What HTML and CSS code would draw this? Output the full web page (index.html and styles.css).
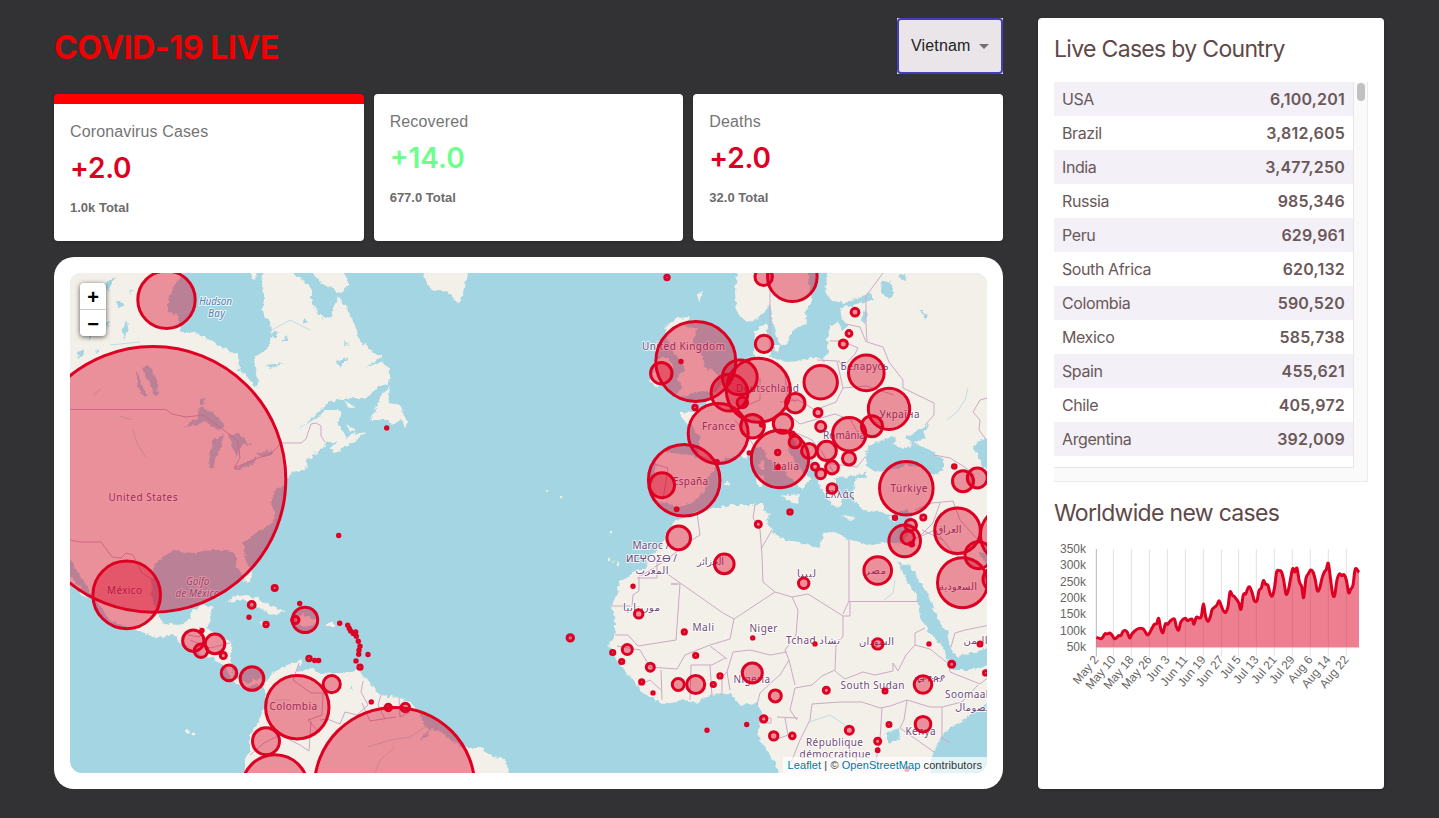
FILE: index.html
```html
<!DOCTYPE html>
<html lang="en">
<head>
<meta charset="utf-8">
<title>COVID-19 LIVE</title>
<link rel="stylesheet" href="styles.css">
</head>
<body>
<div class="app">
  <main class="left">
    <header class="header">
      <h1 class="title">COVID-19 LIVE</h1>
      <div class="select-box"><div class="select"><span>Vietnam</span><svg class="caret" viewBox="0 0 10 5"><path d="M0 0h10L5 5z"/></svg></div></div>
    </header>
    <section class="stats">
      <div class="card stat stat-active"><h2 class="stat-name">Coronavirus Cases</h2><div class="stat-value">+2.0</div><div class="stat-total">1.0k Total</div></div>
      <div class="card stat"><h2 class="stat-name">Recovered</h2><div class="stat-value stat-green">+14.0</div><div class="stat-total">677.0 Total</div></div>
      <div class="card stat"><h2 class="stat-name">Deaths</h2><div class="stat-value">+2.0</div><div class="stat-total">32.0 Total</div></div>
    </section>
    <section class="map-card">
      <div class="map">
        <svg class="map-svg" viewBox="70 273 917 500">
          <defs>
            <filter id="coast" filterUnits="userSpaceOnUse" x="60" y="263" width="937" height="520">
              <feTurbulence type="fractalNoise" baseFrequency="0.2" numOctaves="3" seed="4"/>
              <feDisplacementMap in="SourceGraphic" scale="5.5" xChannelSelector="R" yChannelSelector="G"/>
            </filter>
          </defs>
          <g class="land" filter="url(#coast)">
            <!-- North and Central America -->
            <path d="M60 263H184L184 273 175 285 168 300 168 313 177 315 180 327 182 332 193 332 210 340 227 350 238 355 239 370 247 375 252 385 257 388 259 382 255 367 254 357 267 350 272 337 270 323 262 313 264 300 262 287 264 263H292L292 273 303 280 312 290 312 303 317 312 323 319 332 318 334 307 338 295 343 303 353 320 360 340 373 352 382 357 365 368 380 362 390 368 389 383 377 388 367 398 353 398 337 400 327 403 317 413 307 423 292 433 313 420 327 410 340 410 342 415 337 422 342 430 347 437 360 432 365 433 353 442 340 450 333 453 331 448 337 442 327 442 320 450 307 460 305 470 293 473 287 477 283 487 275 490 272 500 275 517 273 523 257 532 243 543 245 557 252 573 250 582 245 581 242 573 237 567 236 555 227 550 210 550 193 553 173 550 163 557 155 563 152 577 151 597 157 613 163 623 177 625 188 622 193 610 203 605 213 607 210 620 207 627 213 634 233 643 230 657 232 667 233 677 247 683 260 677 265 682 273 673 287 665 302 660 297 672 313 668 318 673 350 672 360 670 363 677 370 683 380 695 397 697 410 702 420 713 425 727 443 733 460 747 480 747 493 757 505 759 512 783H245V757L250 750 250 733 260 718 267 703 265 690 258 684 247 688 233 682 227 670 217 660 207 657 193 650 180 642 173 635 157 638 140 632 110 620 97 603 87 587 77 570 70 560H60z"/>
            <path d="M60 575 72 578 80 586 87 599 78 591 70 584H60zM423 263 423 273 427 283 433 292 447 290 457 303 461 300 466 280 468 263zM390 387 382 393 375 410 370 420 387 420 393 425 400 420 405 428 407 422 400 405 388 403zM227 602 233 597 247 595 260 600 273 607 286 612 270 615 260 607 243 600zM294 623 302 614 313 618 319 623 307 627zM325 623H334V626H325zM260 623 267 622 269 625 262 626zM250 265H259L254 281zM310 263H340L349 285 340 293 330 287 320 283 314 275zM344 400 355 407 349 408zM346 425 357 430 350 432z"/>
            <!-- Europe, Africa and the Middle East -->
            <path d="M738 263 735 293 737 313 748 323 763 315 770 303 773 320 778 340 782 347 788 342 793 330 807 323 805 312 813 300 810 290 806 263H830L825 290 832 301 845 303 860 297 870 293 873 300 860 303 840 308 842 320 848 326 843 330 838 322 830 327 827 340 828 353 823 360 817 357 800 360 790 363 770 357 773 343 767 333 767 323 755 331 754 357 740 362 733 370 727 380 718 388 710 397 705 408 697 412 680 413 683 420 693 427 700 437 698 457 690 455 663 452 657 457 653 480 650 490 655 502 667 503 675 508 693 503 705 490 708 477 720 463 727 457 747 457 753 448 763 447 767 457 777 467 790 477 800 487 803 491 806 483 812 480 797 467 790 453 787 442 793 438 797 447 810 460 817 473 820 487 827 497 832 506 840 507 842 500 837 487 835 478 853 477 865 472 867 476 855 480 854 487 853 500 863 510 880 513 893 515 905 510 913 515 910 530 903 543 890 542 872 545 850 540 837 532 823 533 820 548 800 543 790 542 773 533 767 523 770 513 763 510 763 503 753 505 730 505 697 512 677 520 667 530 663 545 650 557 646 568 633 573 620 582 612 607 615 623 615 633 609 645 617 660 627 673 643 693 663 704 680 700 697 703 710 695 730 693 740 705 757 703 762 713 757 735 767 750 777 767 778 783H930V762L937 743 947 730 967 717 997 697V263z"/>
            <path d="M677 318 690 317 685 327 698 328 692 343 700 353 705 367 718 373 717 383 713 392 697 393 673 398 683 387 677 380 680 373 685 370 680 360 673 353 668 340 665 327zM650 383 655 360 667 357 673 367 668 382 657 387zM697 293 702 292 699 303zM759 463 764 460 763 472 760 470zM757 475 764 474 763 487 758 488zM780 496 800 494 797 504 790 502zM842 515 855 517 850 520zM889 518 898 515 894 522zM772 346 780 345 778 353zM723 484 731 481 729 487z"/>
            <circle cx="609" cy="560" r="1.2"/><circle cx="613" cy="562" r="1.4"/><circle cx="618" cy="564" r="1.4"/><circle cx="546" cy="491" r="1.2"/><circle cx="562" cy="497" r="1.2"/><circle cx="188" cy="732" r="2"/><circle cx="194" cy="734" r="1.4"/><circle cx="610" cy="533" r="1.2"/>
          </g>
          <g class="water" filter="url(#coast)">
            <path d="M865 458 868 447 882 440 893 437 897 440 891 443 903 448 912 445 907 437 923 427 930 424 923 433 927 438 913 443 930 450 943 460 943 470 933 475 920 468 905 465 890 470 877 472 867 467zM997 434 977 442 973 448 980 460 982 467 997 475zM891 553 897 560 907 580 917 597 920 617 930 633 943 647 953 670 967 670 997 664V646L970 653 957 657 950 647 947 633 937 617 927 593 917 577 908 563 903 566zM978 552 987 565 997 580V565L985 553zM882 282 889 281 894 292 888 300 881 292zM898 275 905 274 906 282zM919 309 928 315 926 320zM888 732 899 728 900 740 888 743zM865 310 867 312 865 324 861 320z"/>
            <path d="M141 367 148 365 158 383 159 396 153 395 150 383zM137 370 142 385 148 397 144 398 137 383zM183 428 196 419 200 407 212 412 224 424 220 430 205 422zM210 468 209 455 214 438 224 434 221 447 215 460 213 469zM229 434 240 434 252 446 243 443 239 450 237 457 231 445zM234 470 244 463 258 457 255 463 240 470zM255 453 273 450 272 456 260 457zM200 399 205 398 204 406 200 404zM265 365 284 363 270 369zM270 335 278 330 276 338zM335 363 348 357 341 368zM122 330 127 320 128 330 124 340zM102 284 115 278 108 292zM78 350 84 351 79 360zM283 342 287 334 288 342zM117 300 124 304 119 308z"/>
            <path d="M88 338 92 333 90 341zM95 350 99 349 97 354zM130 290 133 288 131 294zM304 318 308 322 303 324zM345 340 349 344 344 347zM106 323 110 321 108 328zM350 688 352 684 353 692zM420 740 430 728 434 725 426 737z"/>
          </g>
          <g class="borders">
            <path d="M70 409.500H166L172 414 186 417 203 415 221 428 233 437 238 441 240 458 234 468 258 458 272 453 281 443H301L306 439 311 424 316 423 321 426V436L325 442M70 540 80 542H101L112 557 121 558 126 553 133 555 142 573 153 580M188 635 200 637V627M190 640 210 648 230 643M299 663 293 680 311 693 323 693 322 715 308 720 320 733M363 681 361 692 368 705 357 715 345 712 340 724 327 719 320 720M250 755 264 743 280 735 300 745 309 751 311 721M381 695 378 705 385 719M399 697 400 717 410 712M362 703 370 721 396 717"/>
            <path d="M883 273 866 296 866 324 867 342 883 347 889 362 903 380 903 388 934 403 934 415 925 425M846 324 860 327 866 342M830 341 842 341 858 348 855 354 843 367 838 360M817 360 837 361 843 388 836 402 815 410 798 400 780 402M843 388 866 386 894 395M783 410 800 424 835 414 851 420 863 443M790 430 812 440 822 452 835 475M825 463 857 467 865 457M785 375 787 395 796 402M770 350 770 273M735 420 750 440 757 450M760 378 760 400 740 408M697 455 722 463M655 464 668 468 663 500M934 455 950 458 963 466 975 475M915 510 932 503 953 501 960 520 978 540M997 395 980 400 973 412 980 420 979 430 990 445M940 503 933 523 920 536 907 543"/>
            <path d="M697 513 700 535 692 540 666 560 639 577V591L633 595 632 606 611 606M637 578H657V560M666 573 723 613 734 619 775 592 763 582 762 555 760 530 753 518 755 505M772 530 761 549M671 584H680L676 640 638 646 628 635 615 635M671 584 677 584M734 619 730 639 710 645 685 655 677 669 650 667 640 650 617 646M775 592 792 597 798 610 796 635 785 650 789 660 780 675 774 680 760 693 757 705M792 597 808 594 843 616V636L836 646 835 670 822 676 812 685 795 688 790 710 797 720M849 540V601L843 614M849 601.500H918M850 601V616H843M730 690 727 672 733 652 750 650 770 655 787 652M727 672 722 677 722 695M710 665 712 697M691 665H712L725 658M691 665 690 700M661 670 662 700M637 686 650 680 661 690M727 659 710 646M789 660 795 685M835 671 845 679 863 672 875 675 893 671 893 663 898 671 906 655 915 645 915 633 925 628M915 645 930 649 945 661 955 668M948 660 950 672 980 684 997 670M978 685 962 702 942 707 930 707 907 700 890 706 880 708 862 702 840 702 812 704 810 720 800 740 790 765M942 707V738L950 743M907 700 904 720 900 728 934 752M882 708 880 740 874 770M912 540 935 530 955 555 997 570M955 633 965 630 990 625M955 633 951 647M777 717 798 718M785 718 788 735 775 740M757 718H771V723H760M943 540 922 530"/>
          </g>
          <g class="rivers"><path d="M120 416 132 420M133 430 137 443 146 458M93 395 101 389M368 747 390 740 410 737 425 727M375 773 380 760 395 747M884 600 893 593 895 580M809 722 830 715 845 725M968 388 965 400 957 412 947 420M272 330 290 320 310 330M275 700 290 700M110 345 140 342"/></g>
          <g class="labels" id="labels"></g>
          <g class="cases" id="cases"></g>
        </svg>
        <div class="zoom"><span class="zoom-btn">+</span><span class="zoom-btn">−</span></div>
        <div class="credit"><span class="link">Leaflet</span> | © <span class="link">OpenStreetMap</span> contributors</div>
      </div>
    </section>
  </main>
  <aside class="card side">
    <h3 class="side-title">Live Cases by Country</h3>
    <div class="table">
      <div class="rows">
        <div class="row"><span>USA</span><b>6,100,201</b></div>
        <div class="row"><span>Brazil</span><b>3,812,605</b></div>
        <div class="row"><span>India</span><b>3,477,250</b></div>
        <div class="row"><span>Russia</span><b>985,346</b></div>
        <div class="row"><span>Peru</span><b>629,961</b></div>
        <div class="row"><span>South Africa</span><b>620,132</b></div>
        <div class="row"><span>Colombia</span><b>590,520</b></div>
        <div class="row"><span>Mexico</span><b>585,738</b></div>
        <div class="row"><span>Spain</span><b>455,621</b></div>
        <div class="row"><span>Chile</span><b>405,972</b></div>
        <div class="row"><span>Argentina</span><b>392,009</b></div>
        <div class="row"><span>Iran</span><b>373,570</b></div>
      </div>
      <div class="track"><div class="thumb"></div></div>
    </div>
    <h3 class="side-title side-title-2">Worldwide new cases</h3>
    <svg class="chart" viewBox="72 360 942 460">
      <g class="grid"><path d="M250 387V710M304 387V710M358 387V710M412 387V710M466 387V710M520 387V710M574 387V710M626 387V710M679 387V710M733 387V710M787 387V710M841 387V710M895 387V710M949 387V710M199 683H990"/><path class="axis" d="M199 387V710"/></g>
      <path class="area" id="area"/><path class="line" id="line"/>
      <g class="ticks" id="ticks"></g>
    </svg>
  </aside>
</div>
<script src="main.js"></script>
</body>
</html>
```
FILE: main.js
```js
const NS = 'http://www.w3.org/2000/svg';
function add(parent, tag, attrs, text) {
  const el = document.createElementNS(NS, tag);
  for (const k in attrs) el.setAttribute(k, attrs[k]);
  if (text) el.textContent = text;
  document.getElementById(parent).appendChild(el);
}

// Markers: x, y, radius
const cases = [
  [166.5,299.5,28.7],[153,479.2,132.8],[126.7,594.7,33.8],[297.3,707,31.7],[266,741,13.5],[275,787.5,33],[394.6,787.5,80.3],
  [331.7,684,8.6],[305,619.7,12.7],[295.3,619.7,3.5],[274.7,587.7,2.3],[251.7,604.7,3.2],[249,617,1],[266,624.3,2],[299.7,603.3,1],[338.7,535.3,1],
  [339.7,623,1],[347.7,625,1],[349.3,628.3,1],[350.7,630.7,1],[353.3,633.3,1],[355.7,631.7,1],[356.3,636,1],[358.3,641,1],[360,646,1],[359,650,1],[358.7,654,1],[356,660.7,1],[368,654.3,1],[360,667,1.9],
  [309,658.3,2],[314.7,660.3,1],[318.7,660.3,1],[193.3,640.5,10.7],[202,630.3,1],[201,650.5,6.7],[215,643.7,9.8],[223.3,655.3,2.8],[229,672.7,7.8],[252,678.3,11.8],
  [371.3,701.7,1],[388.3,707.3,3],[405.3,707.3,4],[570.3,637.7,3],[386.7,427.7,1],[667,277.3,2],
  [695.8,361.3,40],[681,361.3,1],[661.3,373,10.7],[763.7,276.7,8.7],[792.3,276.5,24.8],[764,343.7,8.7],[758.3,390,32],[739.8,377.2,17.4],[729.5,392.5,18.4],[742.3,402.3,5],
  [718.2,433.3,30],[695,407.3,2],[684.2,480,35.8],[662,485,12.5],[676.7,509,1.2],[752.5,426,11.8],[762,424.3,1.5],[783,423.3,9.7],[795.3,403,9.7],[780,458.8,28.7],
  [777.7,452.3,2],[778,467,1.2],[792,434,2],[795,441.7,5.7],[749.3,452.7,1],[716.7,462,1.5],[790,511.7,2],[809,450.7,7.5],[815,466.5,3.3],[820.7,382,16.7],
  [866.3,372.7,17.8],[889,408.7,20.7],[872,426,10.5],[849.2,434,16.7],[818,412.3,3.8],[820.7,426.3,4.8],[826.7,450.7,9.6],[849,458.3,6.5],[832,467.3,6.4],[820.7,473.7,4.6],[832,488.3,4.6],
  [855,312,3.7],[849,333.3,2.7],[843.3,343.7,3.8],[906.3,488,26.8],[954.3,466.3,1.6],[963,481,10.5],[977.3,477.7,10],[895,517.5,1.5],[923.3,517.3,2.3],
  [957.5,530.5,22.8],[910.7,525,5.6],[904.7,540.7,15.8],[907.7,537.3,6.7],[911.7,544,1.6],[877.7,570.3,13.8],[978.5,555,13.5],[1009,535,28.5],[962.5,582.5,25],[995,579,12],
  [980,643.7,1.8],[877.7,643.7,5],[815,643.7,1],[803.7,583,5],[929,643.7,1],[951.7,664,2.8],[985.7,672.7,2],[923,684.3,8.8],[885,690.7,1.8],[826.3,690,2.8],
  [923,724,7.8],[889,724.3,1.8],[849.3,730,3.8],[877.7,741,2.8],[877.7,750,1.2],[724.3,563.7,9.8],[678.7,537.7,11.8],[758.3,524,2.8],[633,586,1],[638.7,613.7,4],[684.3,631.7,1.9],
  [752.7,637.7,1],[627.3,649.3,4.8],[612.7,652.3,1.9],[621.7,661.3,1.9],[650.3,667,3.8],[695.7,655.3,1.9],[641.7,681.7,1.9],[653,692.7,1],[678.3,684.3,6],[695.7,684.3,9],[713.3,684.3,1.9],
  [720,675.7,1.9],[752.3,672.7,10],[775.3,695.7,6],[763.7,718.7,3],[746.7,724.3,1],[707,730,1],[773.7,735.7,4],[792.3,735.7,2.6],[907,769,1]
];
cases.forEach(([cx, cy, r]) => add('cases', 'circle', { cx, cy: cy + 0.2, r: r < 6 ? r + 0.2 : r }));

// Place names: text, left x, baseline y, width, class
const labels = [
  ['Hudson',199,304.500,33,'sea'],['Bay',208,316.500,17,'sea'],['Golfo',186,585,23.5,'sea'],['de México',175.500,597,44,'sea'],
  ['United States',108.500,500.500,69],['México',107,594,35],['Colombia',269.500,709.500,47.500],
  ['United Kingdom',642,350,83],['Deutschland',736,392,63],['France',702,430,33.500],['España',673,484.500,35],['Italia',773,470,26],
  ['Беларусь',840.500,369.500,48],['Україна',879.500,418,40],['România',823,438.500,42],['Türkiye',890.500,492,37],['Ελλάς',825,498,29],
  ['Maroc /',632.500,549,37],['ⵍⵎⵖⵔⵉⴱ /',626,561.500,51],['المغرب',635.500,573.500,33],['الجزائر',697,565,27],['ليبيا',797,577,19],['موريتانيا',623,611,37],['مصر',865,574,21],
  ['العراق',935.500,533,26],['السعودية',939,590,38],['السودان',859,645,35],['اليمن',963.500,644,24],['Mali',692.500,631,21.500],['Niger',749.500,631.500,28],['Tchad تشاد',786,644,54],
  ['Nigeria',733.500,682.500,36.500],['South Sudan',840.500,689,64],['ኢትዮጵያ',914,682,31],['Soomaaliya',945,698,58],['الصومال',955,711,37],['Kenya',905.500,735,30],
  ['République',806,745.500,57],['démocratique',799.500,757.500,71]
];
labels.forEach(([t, x, y, w, c]) => add('labels', 'text', { x, y, textLength: w, class: c || 'place' }, t));

// Daily new cases as x,y plot points
const pts = '199,652 212,656 218,652 225,641 232,642 239,639 246,645 253,656 260,653 266,647 273,646 280,633 291,635 299,654 306,642 314,633 325,626 338,626 345,634 352,645 358,640 366,625 373,613 380,611 386,595 392,625 399,638 406,612 413,613 420,604 433,597 439,620 446,630 453,605 466,595 473,602 486,597 492,613 499,592 513,592 520,552 527,590 534,604 541,590 547,568 560,556 567,542 574,558 580,572 587,577 594,560 600,516 607,526 614,531 626,548 633,568 640,524 647,522 654,504 660,502 667,520 673,542 681,542 687,512 694,504 700,482 707,493 714,496 720,520 727,528 734,500 740,456 747,452 754,455 761,480 768,522 775,510 781,480 788,446 794,456 801,445 808,485 815,500 821,533 828,475 836,460 842,450 849,456 856,480 862,512 869,505 876,475 883,456 889,448 895,430 902,480 908,522 914,526 921,480 928,462 935,467 942,464 949,480 956,518 962,508 969,495 976,447 987,457'
  .split(' ').map(p => p.split(',').map(Number));
// Smooth the series with a Catmull-Rom curve
let line = 'M' + pts[0];
for (let i = 0; i < pts.length - 1; i++) {
  const a = pts[i - 1] || pts[i], b = pts[i], c = pts[i + 1], d = pts[i + 2] || c;
  line += `C${b[0] + (c[0] - a[0]) / 6} ${b[1] + (c[1] - a[1]) / 6} ${c[0] - (d[0] - b[0]) / 6} ${c[1] - (d[1] - b[1]) / 6} ${c}`;
}
document.getElementById('line').setAttribute('d', line);
document.getElementById('area').setAttribute('d', line + 'V682H199z');
['350k','300k','250k','200k','150k','100k','50k'].forEach((t, i) =>
  add('ticks', 'text', { x: 168, y: 399 + i * 49.1, 'text-anchor': 'end' }, t));
const xs = [199,250,304,358,412,466,520,574,626,679,733,787,841,895,949];
['May 2','May 10','May 18','May 26','Jun 3','Jun 11','Jun 19','Jun 27','Jul 5','Jul 13','Jul 21','Jul 29','Aug 6','Aug 14','Aug 22'].forEach((t, i) =>
  add('ticks', 'text', { transform: `translate(${xs[i] + 9} 720) rotate(-50)`, 'text-anchor': 'end' }, t));
```
FILE: styles.css
```css
* { box-sizing: border-box; margin: 0; }
body { background: #323234; font-family: Inter, "Open Sans", sans-serif; overflow: hidden; }
.app { display: flex; gap: 35px; width: 1439px; height: 818px; padding: 18px 55px 29px 54px; }
.left { display: flex; flex-direction: column; width: 949px; }
.header { display: flex; justify-content: space-between; align-items: center; height: 56px; }
.title { font-size: 32px; font-weight: 700; letter-spacing: -0.45px; line-height: 40px; color: #f00000; padding-top: 4px; white-space: nowrap; }
.select-box { background: #dedaf0; }
.select { display: flex; align-items: center; justify-content: space-between; width: 106px; height: 56px; padding: 0 12px; border: 2px solid #433fb8; border-radius: 4px; background: #e9e5e9; font: 16px "Liberation Sans", Arial, sans-serif; letter-spacing: .15px; color: #222; }
.caret { width: 10px; height: 5px; fill: #707070; margin-top: 1px; }
.card { background: #fff; border-radius: 4px; box-shadow: 0 1px 3px rgba(0,0,0,.2); }
.stats { display: grid; grid-template-columns: repeat(3, 1fr); gap: 10px; height: 147px; margin: 20px 0 16px; }
.stat { padding: 16px; }
.stat-active { border-top: 10px solid #f00; }
.stat-name { font: 400 16px/24px "Liberation Sans", Arial, sans-serif; letter-spacing: .13px; color: #757575; }
.stat-value { font-size: 28px; font-weight: 600; line-height: 34px; letter-spacing: -.2px; margin-top: 7px; color: #dd0023; }
.stat-green { color: #6cff8d; letter-spacing: 0; }
.stat-total { font: 700 13px/18px "Liberation Sans", Arial, sans-serif; margin-top: 14px; color: #6c6c6c; }
.map-card { height: 532px; padding: 16px; background: #fff; border-radius: 20px; }
.map { position: relative; height: 500px; border-radius: 12px; overflow: hidden; background: #a4d5e2; }
.map-svg { display: block; width: 917px; height: 500px; }
.land { fill: #f3f0e9; }
.water { fill: #a4d5e2; }
.borders { fill: none; stroke: #cba9c5; stroke-width: 1; stroke-linejoin: round; }
.rivers { fill: none; stroke: #b4d7df; stroke-width: .8; }
.labels text { font: 10px "Noto Sans", "DejaVu Sans", sans-serif; fill: #704a7b; paint-order: stroke; stroke: rgba(255,255,255,.75); stroke-width: 2px; stroke-linejoin: round; }
.labels .sea { font-style: italic; fill: #5080b0; }
.cases circle { fill: #dd0023; fill-opacity: .4; stroke: #dd0023; stroke-width: 3; }
.zoom { position: absolute; left: 10px; top: 10px; width: 26px; height: 53px; border-radius: 4px; background: #fff; box-shadow: 0 1px 5px rgba(0,0,0,.65); }
.zoom-btn { display: block; height: 27px; font: 700 20px/28px "Liberation Sans", Arial, sans-serif; text-align: center; color: #000; border-bottom: 1px solid #ccc; }
.zoom-btn:last-child { border-bottom: 0; height: 26px; }
.credit { position: absolute; right: 0; bottom: 0; height: 16px; padding: 0 5px; background: rgba(255,255,255,.7); font: 11px/16px "Liberation Sans", Arial, sans-serif; letter-spacing: .08px; color: #333; white-space: nowrap; }
.link { color: #0078a8; }
.side { width: 346px; height: 771px; padding: 16px; color: #5e4848; }
.side-title { font-size: 23px; font-weight: 400; line-height: 30px; letter-spacing: -.68px; color: #5e4848; white-space: nowrap; }
.side-title-2 { margin-top: 16px; }
.table { display: flex; width: 314px; height: 400px; margin-top: 18px; padding-bottom: 14px; background: #fafafa; border: 1px solid #ebebeb; border-width: 0 1px 1px 0; }
.rows { width: 300px; height: 386px; overflow: hidden; background: #fff; border: 1px solid #e6e6e6; border-width: 0 1px 1px 0; }
.row { display: flex; justify-content: space-between; align-items: center; height: 34px; padding: 0 8px; font-size: 16px; color: #6a5858; letter-spacing: -.4px; }
.row b { font-weight: 600; letter-spacing: .2px; }
.row:nth-child(odd) { background: #f3f0f8; }
.row:last-child { padding-bottom: 1px; }
.track { padding: 1px 0 0 3px; }
.thumb { width: 8px; height: 18px; border-radius: 4px; background: #c1c1c1; }
.chart { display: block; width: 314px; height: 153.33px; margin-top: 12px; }
.grid { fill: none; stroke: #e2e2e2; stroke-width: 3; }
.axis { stroke: #b8b8b8; }
.area { fill: rgba(221,0,35,.5); }
.line { fill: none; stroke: #dd0023; stroke-width: 9; stroke-linejoin: round; }
.ticks text { font: 36px "Liberation Sans", Arial, sans-serif; fill: #666; }
```
